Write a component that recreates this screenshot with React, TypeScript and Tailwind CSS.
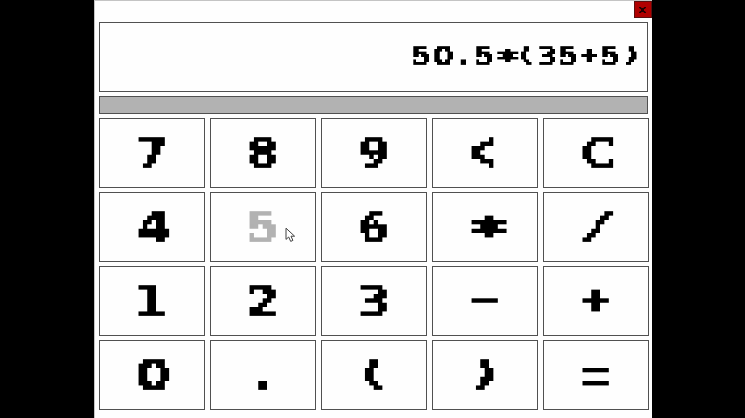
// Every glyph sits in a fixed-width cell; the classes stretch it to the blocky proportions of the face.
const GLYPHS: Record<string, string> = {
  "0": "scale-x-[1.2] -translate-x-[0.056em]",
  "1": "scale-x-[1.18] -translate-x-[0.128em]",
  "2": "scale-x-[1.18] -translate-x-[0.092em]",
  "3": "scale-x-[1.115] -translate-x-[0.07em]",
  "4": "scale-x-[1.17] -translate-x-[0.036em]",
  "5": "scale-x-[1.085] -translate-x-[0.068em]",
  "6": "scale-x-[1.03] -translate-x-[0.048em]",
  "7": "scale-x-[1.115] -translate-x-[0.07em] [-webkit-text-stroke:0.03em]",
  "8": "scale-x-[1.055] -translate-x-[0.05em] [-webkit-text-stroke:0.015em]",
  "9": "scale-x-[1.055] -translate-x-[0.05em]",
  C: "scale-x-[1.17] -translate-x-[0.055em]",
  "<": "scale-x-[0.816] scale-y-[1.233] -translate-x-[0.077em] translate-y-[0.02em] [-webkit-text-stroke:0.02em]",
  "*": "font-['DejaVu_Sans_Mono',monospace] scale-x-[1.6] scale-y-[1.04] -translate-x-[0.07em] translate-y-[0.165em] [-webkit-text-stroke:0.04em]",
  "/": "font-['DejaVu_Sans_Mono',monospace] scale-x-[1.46] scale-y-[0.883] -translate-x-[0.069em] -translate-y-[0.083em] [-webkit-text-stroke:0.02em]",
  "-": "scale-x-[1.91] scale-y-[0.67] -translate-x-[0.09em] -translate-y-[0.1775em]",
  "+": "scale-x-[0.98] scale-y-[0.815] -translate-x-[0.092em] -translate-y-[0.105em] [-webkit-text-stroke:0.02em]",
  "=": "font-normal scale-x-[1] scale-y-[1.48] -translate-x-[0.106em] translate-y-[0.15em]",
  "(": "scale-x-[1.335] scale-y-[0.806] -translate-y-[0.114em]",
  ")": "scale-x-[1.407] scale-y-[0.806] -translate-x-[0.005em] -translate-y-[0.114em]",
  ".": "scale-x-[1.12] scale-y-[1.03] translate-x-[0.104em]",
};

const KEYS = [
  "7", "8", "9", "<", "C",
  "4", "5", "6", "*", "/",
  "1", "2", "3", "-", "+",
  "0", ".", "(", ")", "=",
];

// Lettering is set on a 5px block grid: 8 blocks per cell, 7 blocks of cap height.
function Glyphs({ text }: { text: string }) {
  return (
    <span className="block h-[55px] px-[5px] pt-[4.4px] text-[48px] whitespace-nowrap font-['DejaVu_Sans',sans-serif] leading-none font-bold [filter:url(#blocks)]">
      {Array.from(text).map((ch, i) => (
        <span key={i} className="inline-block h-[1em] w-[40px] text-left align-top">
          <span className={`inline-block h-[1em] origin-[0_0.846em] align-top ${GLYPHS[ch]}`}>{ch}</span>
        </span>
      ))}
    </span>
  );
}

// Samples the lettering at the middle of each 5px block and grows the sample to fill it.
function BlockFilter() {
  return (
    <svg className="absolute h-0 w-0" aria-hidden="true">
      <filter id="blocks" x="0" y="0" width="1" height="1" colorInterpolationFilters="sRGB">
        <feComponentTransfer in="SourceGraphic" result="solid">
          <feFuncA type="discrete" tableValues="0 1" />
        </feComponentTransfer>
        <feFlood x="2" y="2" width="1" height="1" floodColor="#000" result="seed" />
        <feOffset in="seed" dx="0" dy="0" x="0" y="0" width="5" height="5" />
        <feTile result="grid" />
        <feComposite in="solid" in2="grid" operator="in" />
        <feMorphology operator="dilate" radius="2" />
      </filter>
    </svg>
  );
}

function Key({ label, pressed }: { label: string; pressed: boolean }) {
  return (
    <button
      className={`relative flex items-center justify-center border border-[#505050] bg-[#fefefe] pb-[2px] pl-[7px] ${
        pressed ? "text-[#b2b2b2]" : "text-black"
      }`}
    >
      <span className="scale-[0.875] will-change-transform">
        <Glyphs text={label} />
      </span>
      {pressed && (
        <svg className="absolute top-[34px] left-[74px] h-[16px] w-[11px]" viewBox="0 0 11 16">
          <path
            d="M1 1.2V12.4L3.7 10L5.7 14.4L7.9 13.4L6 9.2H9.6Z"
            fill="#fff"
            stroke="#404040"
            strokeWidth="1"
          />
        </svg>
      )}
    </button>
  );
}

export default function App() {
  return (
    <div className="flex h-[418px] w-[745px] justify-start overflow-hidden bg-black pl-[93.5px]">
      <BlockFilter />
      <main className="flex h-full w-[558px] flex-col border-t border-l border-[#c4c4c4] bg-[#fefefe] pl-[4.5px]">
        <header className="flex h-[21px] justify-end">
          <button className="flex h-[17px] w-[18px] items-center justify-center border border-[#5c1010] bg-[#b00000]">
            <svg className="h-[6px] w-[7px]" viewBox="0 0 7 6">
              <path d="M0 0H2.2V1H4.8V0H7V1.2H6V2H5V4H6V4.8H7V6H4.8V5H2.2V6H0V4.8H1V4H2V2H1V1.2H0Z" fill="#250000" />
            </svg>
          </button>
        </header>
        <div className="flex h-[70px] w-[549px] items-center justify-end border border-[#505050] pb-[4px] text-black">
          <span className="origin-right scale-[0.525] will-change-transform">
            <Glyphs text="50.5*(35+5)" />
          </span>
        </div>
        <div className="mt-1 h-[18px] w-[549px] border border-[#505050] bg-[#b2b2b2]" />
        <div className="mt-[4px] grid w-[550px] grid-cols-[repeat(5,106px)] grid-rows-[repeat(4,70px)] gap-x-[5px] gap-y-1">
          {KEYS.map((k) => (
            <Key key={k} label={k} pressed={k === "5"} />
          ))}
        </div>
      </main>
    </div>
  );
}
